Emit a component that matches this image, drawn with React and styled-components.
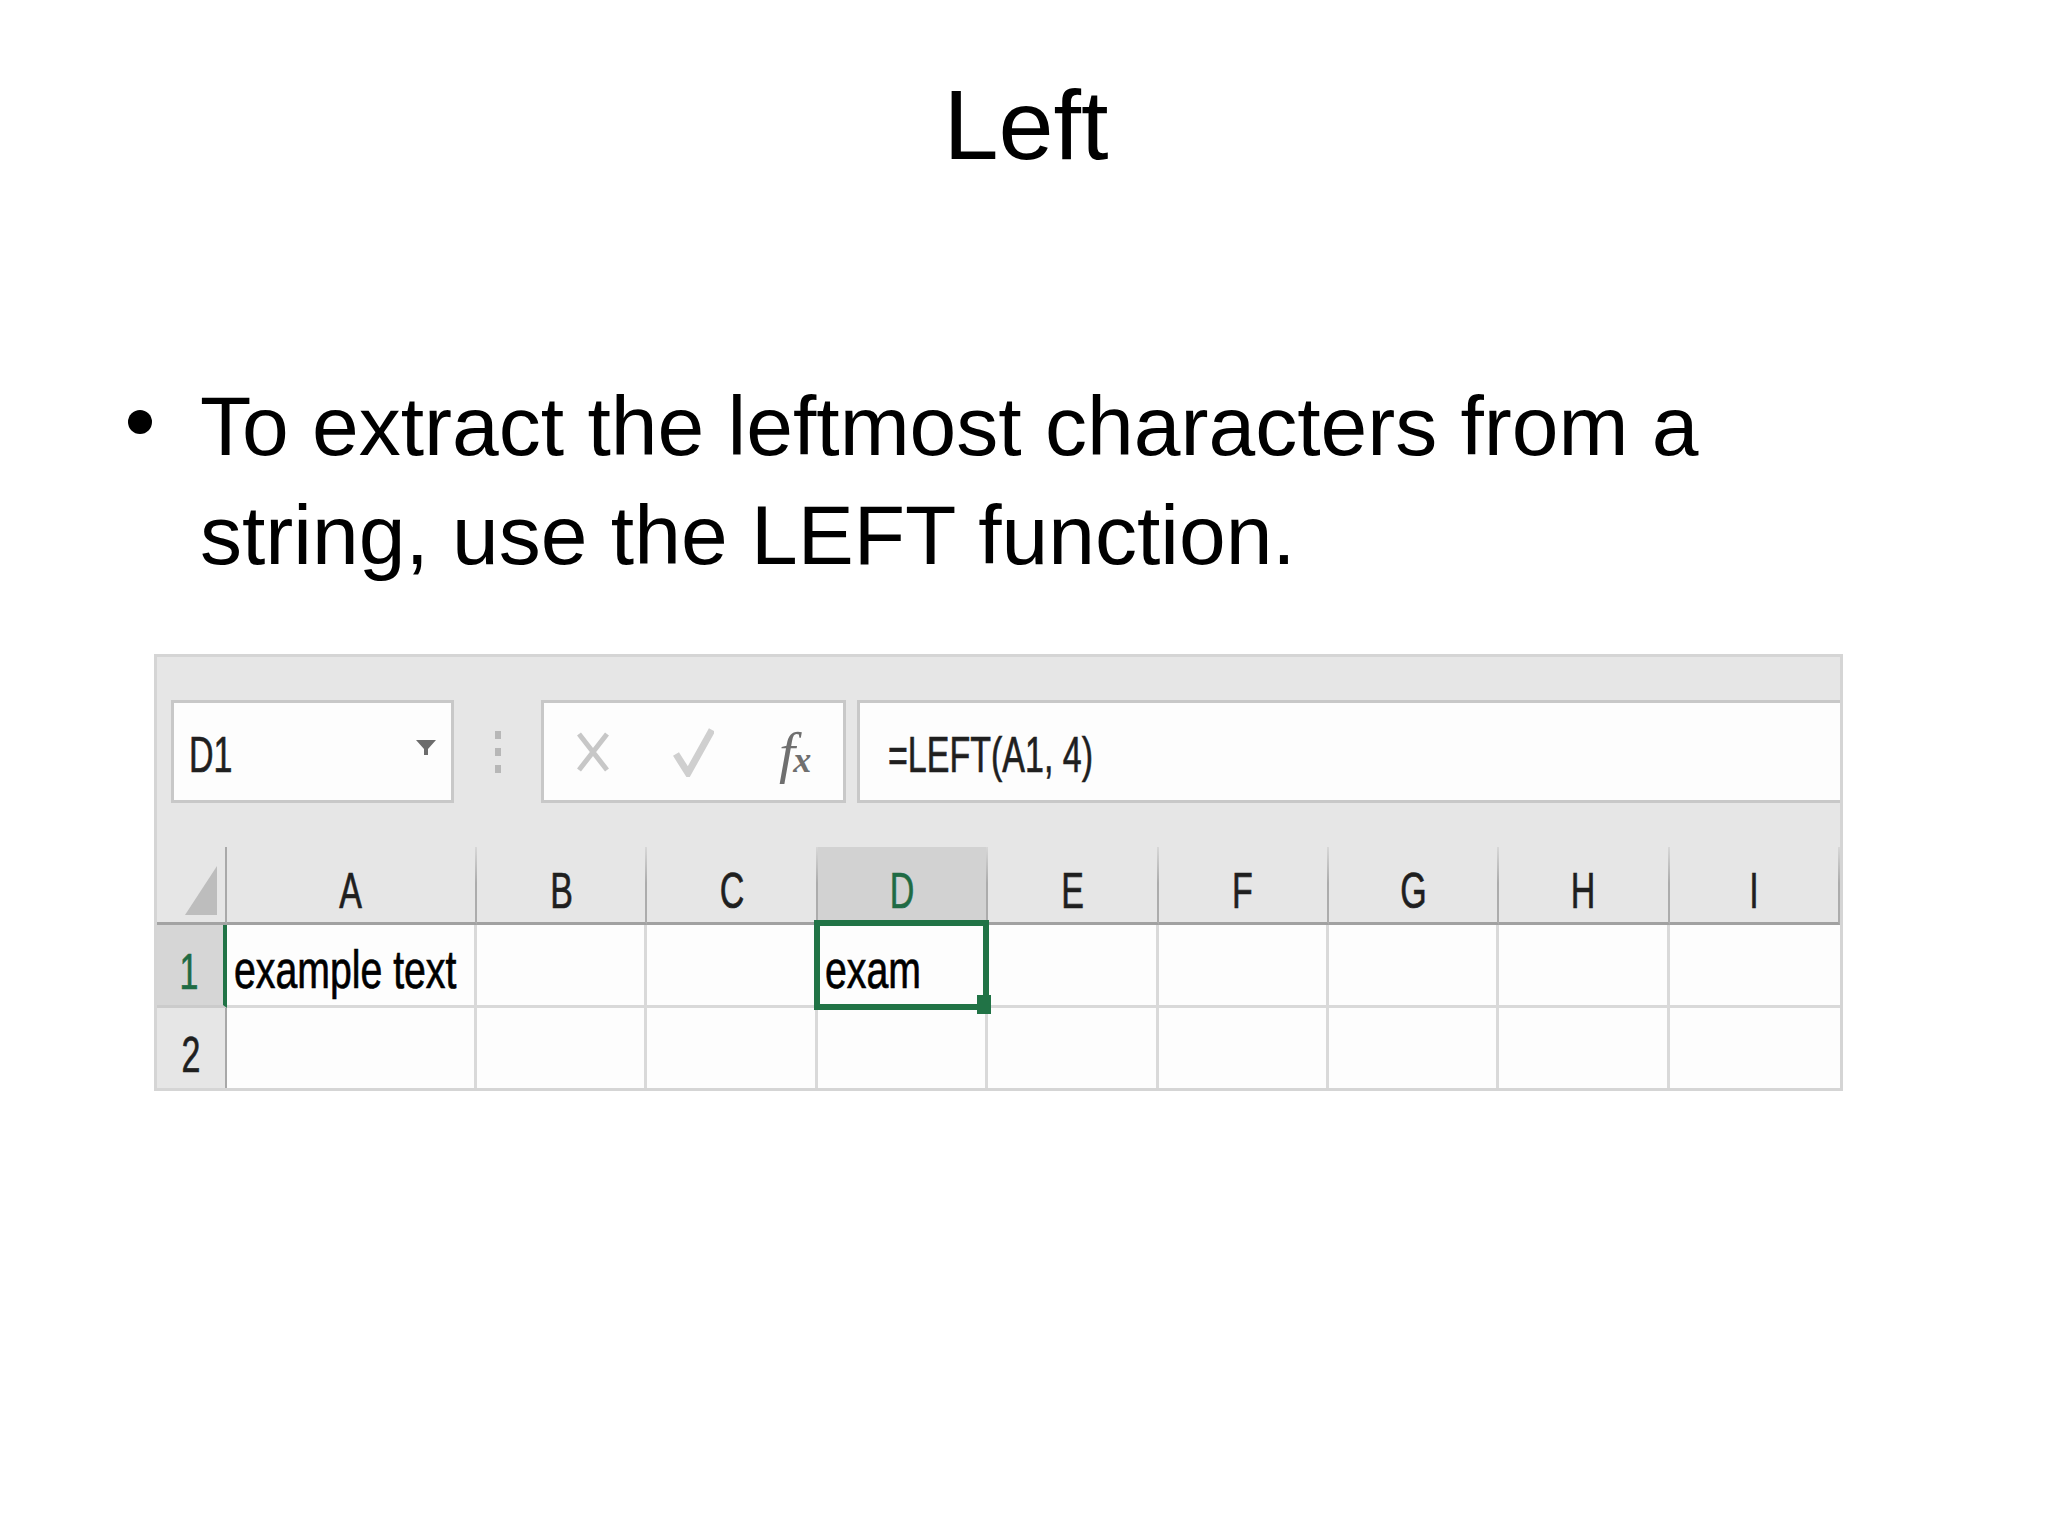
import React from "react";
import styled, { createGlobalStyle } from "styled-components";

const Global = createGlobalStyle`
  html, body { margin: 0; padding: 0; background: #ffffff; }
  * { box-sizing: border-box; }
`;

const Slide = styled.div`
  width: 2048px;
  height: 1536px;
  background: #ffffff;
  overflow: hidden;
  display: flex;
  flex-direction: column;
  font-family: "Liberation Sans", Arial, sans-serif;
  color: #000;
`;

const Title = styled.h1`
  margin: 76px 0 0 0;
  font-weight: 400;
  font-size: 99px;
  line-height: 98px;
  text-align: center;
  padding-left: 4px;
`;

const Body = styled.ul`
  list-style: none;
  margin: 198px 0 0 0;
  padding: 0 0 0 128px;
`;

const BulletItem = styled.li`
  display: flex;
  align-items: flex-start;
`;

const Bullet = styled.span`
  flex: none;
  width: 24px;
  height: 24px;
  border-radius: 50%;
  background: #000;
  margin-top: 38px;
  margin-right: 48px;
`;

const BulletText = styled.span`
  width: 1650px;
  font-size: 84px;
  line-height: 109px;
`;

const Sheet = styled.div`
  margin: 64px 0 0 154px;
  width: 1689px;
  border: 3px solid #d5d5d5;
  background: #e6e6e6;
  display: flex;
  flex-direction: column;
`;

const Toolbar = styled.div`
  display: flex;
  align-items: stretch;
  height: 146px;
  padding: 43px 0 0 14px;
`;

const FieldBox = styled.div`
  height: 103px;
  background: #fdfdfd;
  border: 3px solid #c8c8c8;
  display: flex;
  align-items: center;
  padding-top: 6px;
`;

const NameBox = styled(FieldBox)`
  width: 283px;
  justify-content: space-between;
  padding-left: 15px;
  padding-right: 15px;
`;

const ButtonsBox = styled(FieldBox)`
  width: 305px;
  padding-left: 32px;
  padding-top: 0;
  gap: 63px;
`;

const FormulaBox = styled(FieldBox)`
  flex: 1;
  margin-left: 11px;
  border-right: none;
  padding-left: 28px;
`;

const Grip = styled.div`
  width: 87px;
  display: flex;
  flex-direction: column;
  align-items: center;
  justify-content: center;
  gap: 9px;
  height: 103px;
`;

const GripDot = styled.span`
  width: 6px;
  height: 8px;
  background: #b7b7b7;
`;

const Squish = styled.span`
  display: inline-block;
  white-space: nowrap;
  font-family: "Liberation Sans", Arial, sans-serif;
  font-size: ${(p) => p.$size || 50}px;
  line-height: ${(p) => p.$size || 50}px;
  transform: scaleX(${(p) => p.$sx || 0.68});
  transform-origin: ${(p) => p.$origin || "left"} center;
  color: ${(p) => p.$color || "#1f1f1f"};
  -webkit-text-stroke: 0.7px ${(p) => p.$color || "#1f1f1f"};
`;

const Fx = styled.span`
  display: inline-flex;
  align-items: baseline;
  font-family: "Liberation Serif", "Times New Roman", serif;
  font-style: italic;
  color: #6f6f6f;
  margin-left: 2px;
  margin-top: 2px;
`;

const FxF = styled.span`
  font-size: 58px;
  line-height: 58px;
`;

const FxX = styled.span`
  font-size: 36px;
  line-height: 36px;
  font-weight: 700;
  margin-left: -2px;
`;

const Grid = styled.div`
  margin-top: 44px;
  display: grid;
  grid-template-columns: 70px 250px repeat(8, 1fr);
  grid-template-rows: 78px 83px 80px;
`;

const Corner = styled.div`
  background: #e6e6e6;
  border-right: 2px solid #a9a9a9;
  border-bottom: 3px solid #a3a3a3;
  display: flex;
  align-items: flex-end;
  justify-content: flex-end;
  padding: 0 8px 7px 0;
`;

const ColHeader = styled.div`
  background: ${(p) => (p.$active ? "#d2d2d2" : "#e6e6e6")};
  border-right: 2px solid #acacac;
  border-bottom: 3px solid #a1a1a1;
  position: relative;
  display: flex;
  justify-content: center;
  padding-top: 19px;
  &::after {
    content: "";
    position: absolute;
    right: -2px;
    top: 0;
    width: 2px;
    height: 36px;
    background: linear-gradient(rgba(220, 220, 220, 0.9), rgba(220, 220, 220, 0));
  }
`;

const RowHeader = styled.div`
  background: ${(p) => (p.$active ? "#d6d6d6" : "#e6e6e6")};
  border-right: ${(p) => (p.$active ? "4px solid #217346" : "2px solid #a8a8a8")};
  border-bottom: ${(p) => (p.$last ? "none" : "3px solid #cbcbcb")};
  display: flex;
  justify-content: center;
  padding-top: 22px;
  padding-right: ${(p) => (p.$active ? "2px" : "0")};
`;

const Cell = styled.div`
  background: #fdfdfd;
  border-right: ${(p) => (p.$lastCol ? "none" : "3px solid #d9d9d9")};
  border-bottom: ${(p) => (p.$last ? "none" : "3px solid #d9d9d9")};
  position: relative;
  padding: 18px 0 0 7px;
`;

const Selection = styled.div`
  position: absolute;
  top: -5px;
  left: -4px;
  right: -4px;
  bottom: -5px;
  border: 6px solid #217346;
  z-index: 2;
  pointer-events: none;
`;

const FillHandle = styled.span`
  position: absolute;
  right: -8px;
  bottom: -10px;
  width: 14px;
  height: 19px;
  background: #217346;
`;

const cols = ["A", "B", "C", "D", "E", "F", "G", "H", "I"];

function CancelIcon() {
  return (
    <svg width="34" height="40" viewBox="0 0 34 40">
      <path d="M3 2 L31 38 M31 2 L3 38" stroke="#c7c7c7" strokeWidth="5" fill="none" />
    </svg>
  );
}

function EnterIcon() {
  return (
    <svg width="41" height="50" viewBox="0 0 41 50">
      <path d="M3 27 L15 46 L39 3" stroke="#cfcfcf" strokeWidth="7" fill="none" strokeLinejoin="miter" />
    </svg>
  );
}

function DropArrow() {
  return (
    <svg width="20" height="15" viewBox="0 0 20 15" style={{ marginBottom: 14 }}>
      <path d="M0 0 H20 L12 9 V15 H8 V9 Z" fill="#6c6c6c" />
    </svg>
  );
}

function SelectAll() {
  return (
    <svg width="32" height="49" viewBox="0 0 32 49">
      <path d="M32 0 V49 H0 Z" fill="#bdbdbd" />
    </svg>
  );
}

export default function App() {
  return (
    <>
      <Global />
      <Slide>
        <Title>Left</Title>
        <Body>
          <BulletItem>
            <Bullet />
            <BulletText>To extract the leftmost characters from a string, use the LEFT function.</BulletText>
          </BulletItem>
        </Body>
        <Sheet>
          <Toolbar>
            <NameBox>
              <Squish>D1</Squish>
              <DropArrow />
            </NameBox>
            <Grip>
              <GripDot />
              <GripDot />
              <GripDot />
            </Grip>
            <ButtonsBox>
              <CancelIcon />
              <EnterIcon />
              <Fx>
                <FxF>f</FxF>
                <FxX>x</FxX>
              </Fx>
            </ButtonsBox>
            <FormulaBox>
              <Squish>=LEFT(A1, 4)</Squish>
            </FormulaBox>
          </Toolbar>
          <Grid>
            <Corner>
              <SelectAll />
            </Corner>
            {cols.map((c) => (
              <ColHeader key={c} $active={c === "D"}>
                <Squish $origin="center" $color={c === "D" ? "#1f6b44" : "#1f1f1f"}>
                  {c}
                </Squish>
              </ColHeader>
            ))}
            <RowHeader $active>
              <Squish $origin="center" $color="#1f6b44">1</Squish>
            </RowHeader>
            {cols.map((c, i) => (
              <Cell key={"r1" + c} $lastCol={i === cols.length - 1}>
                {c === "A" && (
                  <Squish $size={53} $sx={0.74} $color="#000">
                    example text
                  </Squish>
                )}
                {c === "D" && (
                  <>
                    <Squish $size={53} $sx={0.74} $color="#000">
                      exam
                    </Squish>
                    <Selection>
                      <FillHandle />
                    </Selection>
                  </>
                )}
              </Cell>
            ))}
            <RowHeader $last>
              <Squish $origin="center">2</Squish>
            </RowHeader>
            {cols.map((c, i) => (
              <Cell key={"r2" + c} $last $lastCol={i === cols.length - 1} />
            ))}
          </Grid>
        </Sheet>
      </Slide>
    </>
  );
}
